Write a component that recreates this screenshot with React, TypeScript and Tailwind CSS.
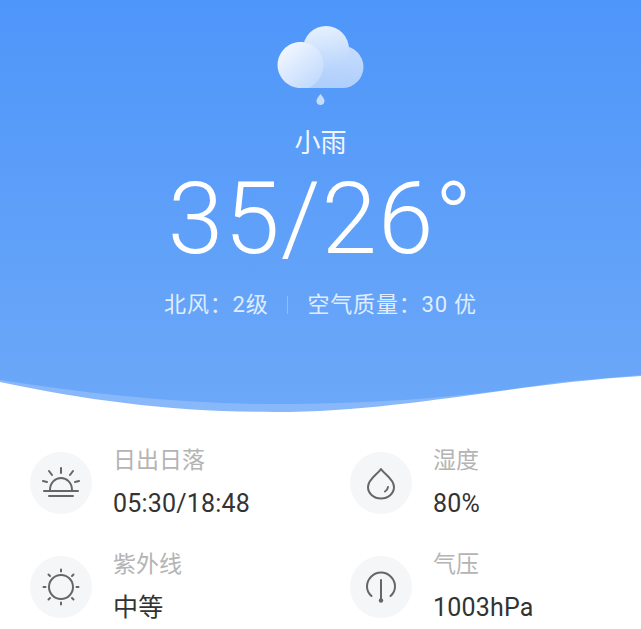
import React from "react";

const font = { fontFamily: '"Roboto", "Noto Sans CJK SC", sans-serif' };

function CloudIcon() {
  return (
    <svg width="88" height="84" viewBox="0 0 88 84" className="block">
      <defs>
        <linearGradient id="c1" gradientUnits="userSpaceOnUse" x1="6" y1="20" x2="42" y2="64">
          <stop offset="0" stopColor="#f4f8ff" />
          <stop offset="1" stopColor="#bcd7fd" />
        </linearGradient>
        <linearGradient id="c2" gradientUnits="userSpaceOnUse" x1="42" y1="1" x2="50" y2="50">
          <stop offset="0" stopColor="#e8f1fe" />
          <stop offset="1" stopColor="#b3d1fc" />
        </linearGradient>
        <linearGradient id="c3" gradientUnits="userSpaceOnUse" x1="62" y1="21" x2="58" y2="63">
          <stop offset="0" stopColor="#c6dcfd" />
          <stop offset="1" stopColor="#aecefc" />
        </linearGradient>
      </defs>
      <path d="M23 63V21h42.500a21 21 0 0 1 0 42z" fill="url(#c3)" />
      <circle cx="49" cy="24" r="23" fill="url(#c2)" />
      <path d="M23.500 17C36 17 46.500 27.500 46.500 40c0 10-6 18.500-15 23H23.500C11 63 .5 52.500 .5 40S11 17 23.500 17z" fill="url(#c1)" />
      <path d="M43.500 69c1.800 2.500 4 4.600 4 7 0 2.400-1.800 4-4 4s-4-1.600-4-4c0-2.400 2.200-4.500 4-7z" fill="#c6dcfd" />
    </svg>
  );
}

function SunriseIcon() {
  return (
    <svg width="38" height="32" viewBox="0 0 38 32" fill="none" stroke="#666" strokeWidth="2" strokeLinecap="round">
      <path d="M8 23c0-7 5-12 11-12s11 5 11 12" />
      <path d="M2 24h34M7 29h24" />
      <path d="M19 1v5M7 4l3 4M31 4l-3 4M1 14l4 1M37 14l-4 1" />
    </svg>
  );
}

function SunIcon() {
  return (
    <svg width="38" height="38" viewBox="0 0 38 38" fill="none" stroke="#666" strokeWidth="2" strokeLinecap="round">
      <circle cx="19" cy="19" r="12" />
      <path d="M19 1.500v2M19 34.500v2M1.500 19h2M34.500 19h2M6.500 6.500l1.500 1.500M30 30l1.500 1.500M31.500 6.500L30 8M8 30l-1.500 1.500" />
    </svg>
  );
}

function DropIcon() {
  return (
    <svg width="30" height="33" viewBox="0 0 30 33" fill="none" stroke="#666" strokeWidth="2" strokeLinecap="round" strokeLinejoin="round">
      <path d="M15 2c3 5 13 10 13 18 0 6.500-5.800 11.500-13 11.500S2 26.500 2 20C2 12 12 7 15 2z" />
      <path d="M22 20c-.2 2-1.300 3.500-3 4.500" />
    </svg>
  );
}

function GaugeIcon() {
  return (
    <svg width="32" height="32" viewBox="0 0 32 32" fill="none" stroke="#666" strokeWidth="2" strokeLinecap="round">
      <path d="M6.500 25C3.500 22.500 2 19 2 15.500 2 8 8.300 1.500 16 1.500S30 8 30 15.500c0 3.500-1.500 7-4.500 9.500" />
      <path d="M16 9v20" />
      <circle cx="16" cy="29.500" r="2.200" fill="#666" stroke="none" />
    </svg>
  );
}

function Stat({ icon, label, value }: { icon: React.ReactNode; label: string; value: string }) {
  return (
    <div className="flex items-center gap-[21px] h-[62px]">
      <div className="w-[62px] h-[62px] rounded-full bg-[#f5f6f8] flex items-center justify-center shrink-0">
        {icon}
      </div>
      <div className="flex flex-col">
        <span className="text-[23px] leading-[30px] -mt-px text-[#b4b4b4] whitespace-nowrap">{label}</span>
        <span className="text-[25px] leading-[30px] mt-[13px] tracking-[0.2px] text-[#333] whitespace-nowrap">{value}</span>
      </div>
    </div>
  );
}

export default function App() {
  return (
    <div className="w-[641px] h-[629px] overflow-hidden bg-white" style={font}>
      {/* Header */}
      <div className="relative h-[412px] bg-gradient-to-b from-[#4e96fa] to-[#6ca8f8] flex flex-col items-center pt-[25px]">
        <CloudIcon />
        <div className="text-[26px] leading-[32px] mt-[18px] text-[#f2f7ff]">小雨</div>
        <div className="text-[100px] leading-[110px] mt-[5px] font-light text-white tracking-[1px]">35/26°</div>
        <div className="flex items-center text-[22px] leading-[28px] mt-[17px] text-[#e0edff] tracking-[0.8px]">
          <span>北风：2级</span>
          <span className="w-px h-[18px] bg-[#8fbdfb] mx-[19px]" />
          <span>空气质量：30 优</span>
        </div>
        {/* Wave */}
        <svg className="absolute left-0 bottom-0" width="641" height="40" viewBox="0 0 641 40">
          <path d="M0 8C90 22 190 33 290 32 400 31 470 24 560 10L641 3V40H0z" fill="#88b8fa" />
          <path d="M0 10C90 29 175 40 275 40 400 40 510 12 641 4V41H0z" fill="white" />
        </svg>
      </div>

      {/* Stats */}
      <div className="grid grid-cols-[320px_1fr] gap-y-[42px] pl-[30px] pt-[40px]">
        <Stat icon={<SunriseIcon />} label="日出日落" value="05:30/18:48" />
        <Stat icon={<DropIcon />} label="湿度" value="80%" />
        <Stat icon={<SunIcon />} label="紫外线" value="中等" />
        <Stat icon={<GaugeIcon />} label="气压" value="1003hPa" />
      </div>
    </div>
  );
}
